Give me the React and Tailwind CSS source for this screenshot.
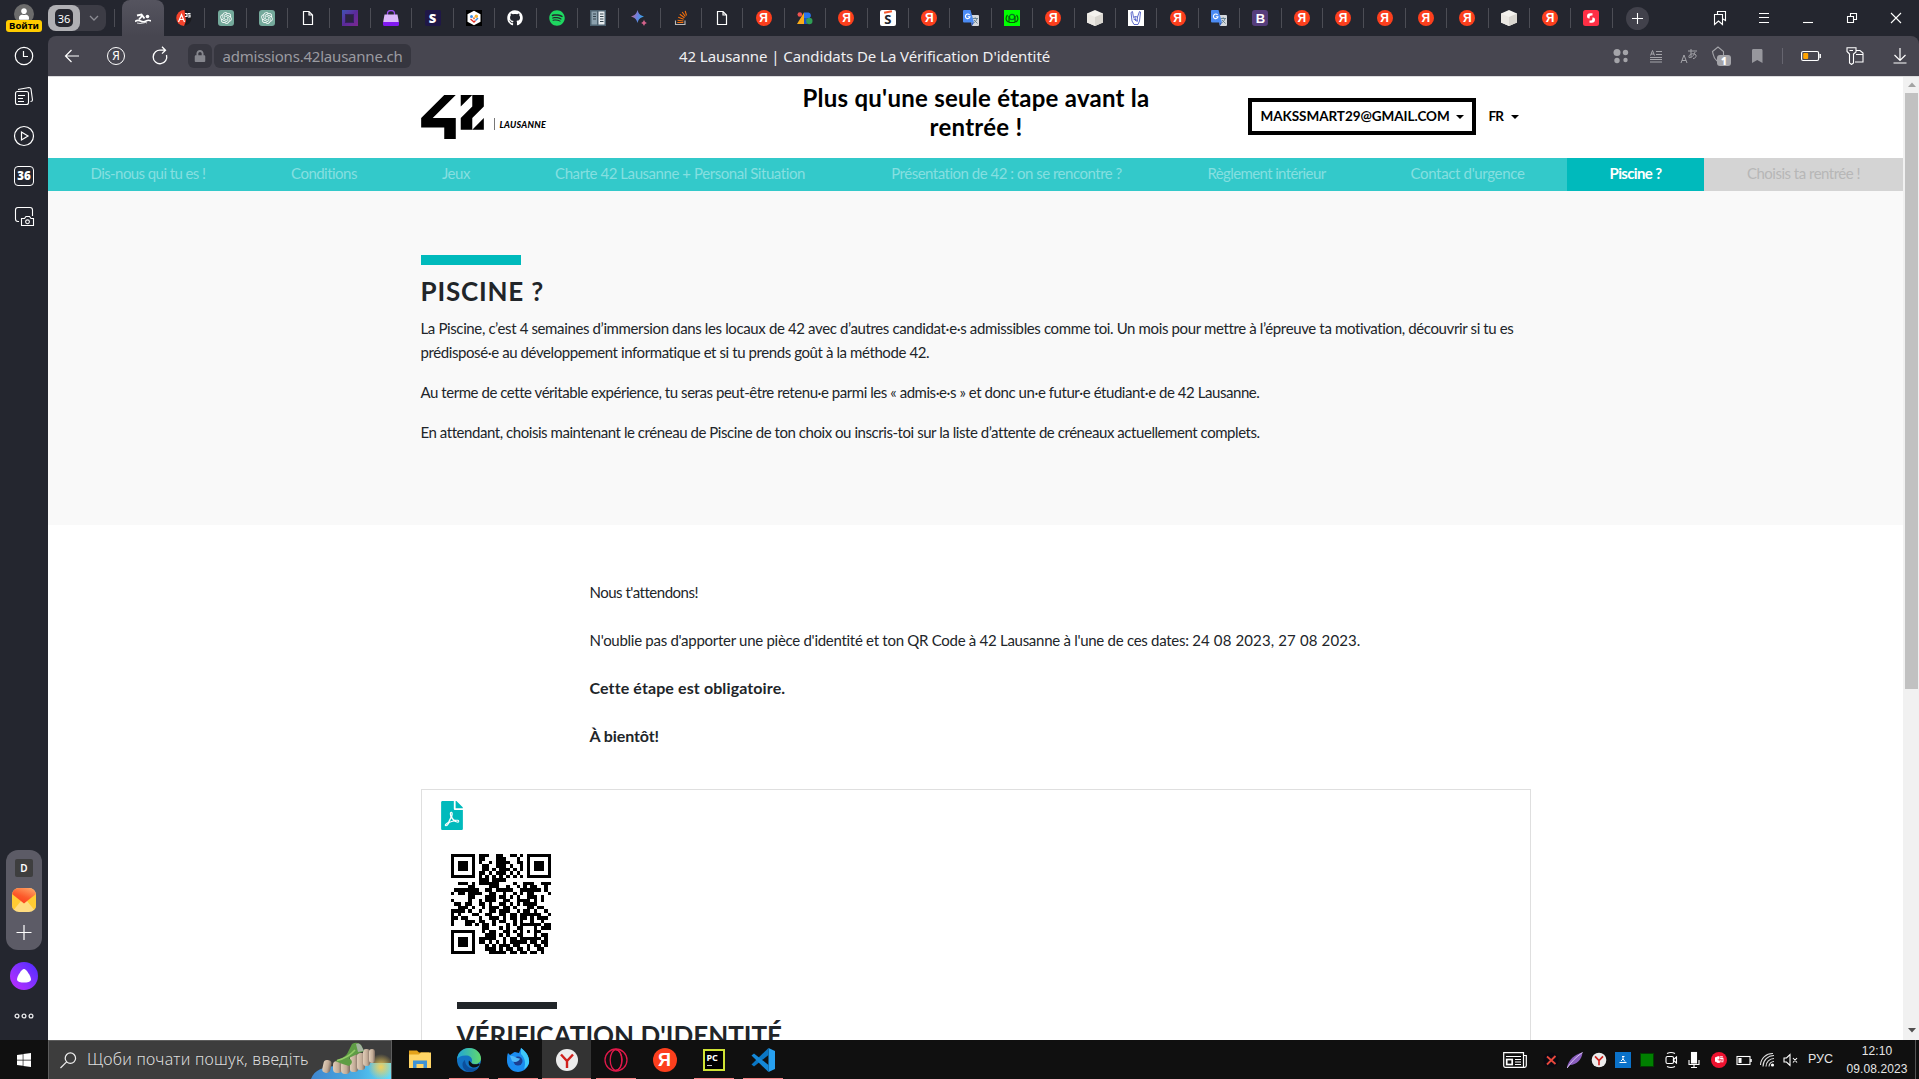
import {
  FaFilePdf, FaGithub, FaSpotify, FaBookmark, FaWindows, FaLock, FaFistRaised, FaUser,
} from "react-icons/fa";
import { RiOpenaiFill } from "react-icons/ri";

const QR_ROWS = [
  "11111110111001100110101111111",
  "10000010110001110001001000001",
  "10111010100101111001101011101",
  "10111010011001110100101011101",
  "10111010011010111010101011101",
  "10000010110101110101001000001",
  "11111110101010101010101111111",
  "00000000111011110000000000000",
  "00111010111111000010011100111",
  "00000110000111001001010110010",
  "01111111001101111100111111010",
  "10110111100110010010101100001",
  "00000110001110110101001110100",
  "10000100101110011001111010100",
  "01101100110100110101011110000",
  "00111010010111011010001101100",
  "11110100100110111001011010010",
  "10100011001100110110111111001",
  "11011000100111010110110101110",
  "10001110110010110010100100100",
  "10001101011010001010111111011",
  "00000000011000101001100010111",
  "11111110010110011010101011000",
  "10000010001110101001100010110",
  "10111010111110010110111111010",
  "10111010110101010111110110110",
  "10111010001010111011001011010",
  "10000010001110101101101001100",
  "11111110000111110110110110100",
];

function QrCode() {
  return (
    <svg viewBox="0 0 29 29" className="h-[100px] w-[100px]" shapeRendering="crispEdges">
      {QR_ROWS.map((row, y) =>
        [...row].map((c, x) => (c === "1" ? <rect key={`${x}-${y}`} x={x} y={y} width="1" height="1" /> : null))
      )}
    </svg>
  );
}

const ya = "flex size-4 items-center justify-center rounded-full bg-[#fc3f1d] font-['Liberation_Sans',sans-serif] text-[12px] font-bold leading-none text-white";

function Cube() {
  return (
    <svg viewBox="0 0 16 16" className="size-4">
      <path d="M8 0 16 3.500V12.500L8 16 0 12.500V3.500Z" fill="#f4f2ee" />
      <path d="M8 7 16 3.500V12.500L8 16Z" fill="#d9d6d0" />
      <path d="M0 3.500 8 7V16L0 12.500Z" fill="#ebe8e3" />
    </svg>
  );
}

function Translate() {
  return (
    <svg viewBox="0 0 16 16" className="size-4">
      <path d="M6 5H15a1 1 0 0 1 1 1V15a1 1 0 0 1-1 1H9Z" fill="#d5d8dc" />
      <path d="M9.500 8.500H15M12.200 7.300V8.500M14 8.500C13.500 11 11.500 12.500 10.500 13M11 10 14.500 13.500" stroke="#607d8b" fill="none" strokeWidth=".9" />
      <path d="M1 0H7.500L11 12.500H1a1 1 0 0 1-1-1V1A1 1 0 0 1 1 0Z" fill="#4b8bf4" />
      <path d="M6.600 5A2.300 2.300 0 1 0 7 6.700H4.800" stroke="#fff" strokeWidth="1.100" fill="none" />
      <path d="M8 12.500H11L9 16Z" fill="#2f5fc4" />
    </svg>
  );
}

function Favicon({ kind }) {
  switch (kind) {
    case "ya":
      return <span className={ya}>Я</span>;
    case "gpt":
      return <span className="flex size-4 items-center justify-center rounded-[3px] bg-[#74a99b]"><RiOpenaiFill className="size-3.5 text-white" /></span>;
    case "doc":
      return (
        <svg viewBox="0 0 16 16" className="size-4" fill="none" stroke="#fff" strokeWidth="1.200">
          <path d="M3.500 1.500H9L12.500 5V14.500H3.500ZM9 1.500V5H12.500" />
        </svg>
      );
    case "angular":
      return (
        <svg viewBox="0 0 16 16" className="size-4">
          <circle cx="8" cy="8" r="7.500" fill="#1b1b1f" />
          <path d="M8.500 0A8 8 0 0 0 8 16L10 11Z" fill="#f4432c" />
          <path d="M2.500 12 5.500 4.500 8.500 12M3.500 9.500H7.500M9 3.500h2v3h-2M12 3.500h2.500M12 5h2v2h-2" stroke="#fff" strokeWidth="1.200" fill="none" />
        </svg>
      );
    case "square":
      return <span className="flex size-4 items-center justify-center bg-linear-to-br from-[#3b52b5] via-[#5a2a9a] to-[#7d2690]"><span className="size-[9px] border border-[#35205f] bg-[#2a2440]" /></span>;
    case "bag":
      return (
        <svg viewBox="0 0 16 16" className="size-4">
          <path d="M4.500 6V3.500a3.500 3 0 0 1 7 0V6" fill="none" stroke="#9b4df0" strokeWidth="1.300" />
          <path d="M1.500 4.500H14.500L16 13H0Z" fill="#dcb8fa" />
          <path d="M0 12H16V14.500a1.500 1.500 0 0 1-1.500 1.500H1.500A1.500 1.500 0 0 1 0 14.500Z" fill="#8118f0" />
        </svg>
      );
    case "s":
      return <span className="flex size-4 items-center justify-center rounded-[2px] bg-[#1f1747] font-['Noto_Sans',sans-serif] text-[13px] font-black leading-none text-white">S</span>;
    case "hex":
      return (
        <svg viewBox="0 0 16 16" className="size-4">
          <path d="M0 0H16V16H0Z" fill="#000" />
          <path d="M8 .7 14.500 4.300V11.700L8 15.300 1.500 11.700V4.300Z" fill="#fff" />
          <circle cx="5.500" cy="6.500" r="1.500" fill="#3a8ee6" /><circle cx="10.300" cy="6.300" r="1.700" fill="#f2b233" />
          <path d="M4.500 9 8 12 9.500 10.500" stroke="#e6332a" strokeWidth="1.400" fill="none" /><path d="M9.500 10.500 12 8" stroke="#3a8ee6" strokeWidth="1.400" /><circle cx="8" cy="8.300" r="1.100" fill="#ef7d32" />
        </svg>
      );
    case "github":
      return <FaGithub className="size-4 text-white" />;
    case "spotify":
      return <FaSpotify className="size-4 text-[#1ed760]" />;
    case "book":
      return (
        <svg viewBox="0 0 16 16" className="size-4">
          <path d="M0 0H16V16H0Z" fill="#4d6270" /><path d="M1.500 1.500H7V14.500H1.500Z" fill="#8ba0ad" /><path d="M8.500 1.500H14.500V14.500H8.500Z" fill="#e8edf0" />
          <path d="M3 4H6M3 6.500H6M3 9H6M10 4H13.500M10 6.500H13.500M10 9H13.500M10 11.500H13.500" stroke="#34454f" />
        </svg>
      );
    case "spark":
      return (
        <svg viewBox="0 0 16 16" className="size-4">
          <defs><linearGradient id="spark" x1="0" x2="1" y2=".3"><stop stopColor="#d9667b" /><stop offset=".55" stopColor="#6f7fe0" /><stop offset="1" stopColor="#35a3e8" /></linearGradient></defs>
          <path d="M6.500 0C7.500 3.800 9.200 5.500 13 6.500 9.200 7.500 7.500 9.200 6.500 13 5.500 9.200 3.800 7.500 0 6.500 3.800 5.500 5.500 3.800 6.500 0Z" fill="url(#spark)" />
          <path d="M13 9.500c.6 2.200 1.300 2.900 3 3.500-1.700.6-2.400 1.300-3 3-.6-1.700-1.300-2.400-3-3 1.700-.6 2.400-1.300 3-3.500Z" fill="#d5638c" />
        </svg>
      );
    case "so":
      return (
        <svg viewBox="0 0 16 16" className="size-4" fill="none">
          <path d="M2.500 10.500V14.500H12V10.500" stroke="#bcbbbb" strokeWidth="1.100" />
          <path d="M4.300 12.500H10.300M4.500 10.200 10.400 11M5.200 7.300 10.700 9.200M6.800 4.300 11.500 7.700M9.200 2 12.400 6.500M12.200.8 13.500 5.500" stroke="#f4700c" strokeWidth="1.100" />
        </svg>
      );
    case "color":
      return (
        <svg viewBox="0 0 16 16" className="size-4">
          <circle cx="2.800" cy="4.500" r="2.300" fill="#ef5350" />
          <path d="M7 2.500V14H0Z" fill="#fbab18" />
          <path d="M7 2.500H11.500a3 3 0 0 1 1 5.500H7Z" fill="#2a73e8" /><path d="M7 8H10V14H7Z" fill="#1b52c5" />
          <circle cx="12.300" cy="11" r="3.200" fill="#2f9e55" />
        </svg>
      );
    case "swhite":
      return <span className="relative flex size-4 items-center justify-center rounded-[2px] bg-white font-['Noto_Sans',sans-serif] text-[13px] font-bold leading-none text-[#20242c]"><span className="absolute top-[1px] right-[4px] h-[2px] w-2 -rotate-12 bg-[#f4572b]" /><span className="pt-0.5">S</span></span>;
    case "green":
      return (
        <svg viewBox="0 0 16 16" className="size-4">
          <path d="M0 0H16V16H0Z" fill="#0f0" />
          <circle cx="8" cy="7" r="2.600" fill="none" stroke="#072" strokeWidth="1.300" />
          <path d="M3.500 5C1 8 2 12 5.500 12M12.500 5C15 8 14 12 10.500 12M5 6V12M11 6V12M5 12.500H11" fill="none" stroke="#085a08" strokeWidth="1.200" />
        </svg>
      );
    case "cube":
      return <Cube />;
    case "hand":
      return (
        <svg viewBox="0 0 16 16" className="size-4">
          <path d="M0 0H16V16H0Z" fill="#fff" />
          <path d="M4.500 1.500 5.500 7.500 7 6.500 9.500 7 11.500 1.500 12.500 2 11.500 11 10 14.500H6L4 11 3 2.500ZM5.500 9 9.500 10.500M7 7 7.500 11M9.500 7 9 12" fill="none" stroke="#4f5cc6" strokeWidth=".9" />
        </svg>
      );
    case "tr":
      return <Translate />;
    case "b":
      return <span className="flex size-4 items-center justify-center rounded-[3px] bg-[#563d7c] font-['Liberation_Sans',sans-serif] text-[13px] font-bold leading-none text-white">B</span>;
    case "red":
      return (
        <svg viewBox="0 0 16 16" className="size-4">
          <rect width="16" height="16" rx="2.500" fill="#ff2f45" />
          <path d="M9.500 3.200V5.400H8.200A1.600 1.600 0 0 0 6.600 7V8.400H6A2 2 0 0 1 4 6.400 3.200 3.200 0 0 1 7.200 3.200ZM6.500 12.800V10.600H7.800A1.600 1.600 0 0 0 9.400 9V7.600H10A2 2 0 0 1 12 9.600 3.200 3.200 0 0 1 8.800 12.800Z" fill="#fff" />
        </svg>
      );
    default:
      return null;
  }
}

const TABS = [
  "angular", "gpt", "gpt", "doc", "square", "bag", "s", "hex", "github", "spotify", "book", "spark", "so", "doc", "ya", "color", "ya",
  "swhite", "ya", "tr", "green", "ya", "cube", "hand", "ya", "tr", "b", "ya", "ya", "ya", "ya", "ya", "cube", "ya", "red",
];

function TabStrip() {
  return (
    <div className="flex h-9 shrink-0 items-stretch">
      <div className="my-[5px] flex w-[58px] rounded-lg bg-[#3c3c45]">
        <div className="flex w-8 items-center justify-center rounded-lg bg-[#b0b0b4]">
          <span className="flex h-[18px] w-[18px] items-center justify-center rounded-[5px] bg-[#26272f] font-['Noto_Sans',sans-serif] text-[11px] leading-none text-white">36</span>
        </div>
        <svg viewBox="0 0 26 26" className="w-[26px]" fill="none" stroke="#8c8c93" strokeWidth="1.300"><path d="M10 11 14 15 18 11" /></svg>
      </div>
      <div className="my-[9px] ml-2 mr-[7px] w-px bg-[#4c4d55]" />
      <div className="flex w-[42px] items-center justify-center rounded-t-lg bg-linear-to-b from-[#55545f] to-[#474650]">
        <svg viewBox="0 0 16 16" className="size-4" fill="none" stroke="#fff">
          <path d="M2 5.500 6.500 4.500 9.500 8.500M7 6 4 9.500" strokeWidth="1.900" /><circle cx="12.500" cy="6.500" r="1.800" fill="#fff" stroke="none" />
          <path d="M0 11.500Q2.500 9.500 5.500 11T11 11 16 11" strokeWidth="1.700" /><path d="M2 13Q5 14 8 13T12 13" strokeWidth=".8" />
        </svg>
      </div>
      {TABS.map((k, i) => (
        <div key={i} className="flex w-[41.4px] shrink-0 items-center">
          <div className="flex flex-1 justify-center"><Favicon kind={k} /></div>
          <div className="h-5 w-px bg-[#4c4d55]" />
        </div>
      ))}
      <div className="flex flex-1 items-center pl-[13px]">
        <svg viewBox="0 0 23 23" className="size-[23px] rounded-full bg-[#41414b]" stroke="#fff" strokeWidth="1.100"><path d="M6 11.500H17M11.500 6V17" /></svg>
      </div>
      <div className="flex w-[221px] items-center">
        <svg viewBox="0 0 44 36" className="w-11" fill="none" stroke="#fff" strokeWidth="1.100">
          <path d="M16.500 14.500H24.500V24.500L20.500 21 16.500 24.500ZM19.500 14V11.500H27.500V20.500L25 19" />
        </svg>
        <svg viewBox="0 0 44 36" className="w-11" stroke="#fff" strokeWidth="1.100"><path d="M17 13.500H27M17 17.500H27M17 22.500H27" /></svg>
        <svg viewBox="0 0 44 36" className="w-11" stroke="#fff" strokeWidth="1.100"><path d="M17 22.500H27" /></svg>
        <svg viewBox="0 0 44 36" className="w-11" fill="none" stroke="#fff" strokeWidth="1.100"><path d="M17.500 16.500H23.500V22.500H17.500ZM20.500 16.500V13.500H26.500V19.500H23.500" /></svg>
        <svg viewBox="0 0 44 36" className="w-11" stroke="#fff" strokeWidth="1.100"><path d="M17 13 27 23M27 13 17 23" /></svg>
      </div>
    </div>
  );
}

function ToolbarIcons() {
  return (
    <div className="flex h-10 w-[320px] items-center text-[#a4a4a9]">
      <svg viewBox="0 0 16 16" className="ml-[14px] size-4" fill="currentColor"><circle cx="4" cy="4.500" r="3.500" /><circle cx="12.500" cy="4.500" r="2.700" /><circle cx="4" cy="12.500" r="2.700" /><circle cx="12.500" cy="12" r="2.200" /></svg>
      <svg viewBox="0 0 14 14" className="ml-[20px] size-[14px]" fill="none" stroke="currentColor"><path d="M7 2.500H13M7 5.500H13M1 8.500H13M1 10.500H13M1 13H13M1.500 6.500 3.500 1.500 5.500 6.500M2 5H5" /></svg>
      <svg viewBox="0 0 18 16" className="ml-[17px] h-4 w-[18px]" fill="none" stroke="currentColor"><path d="M1 15 4 7 7 15M2 12.500H6M8 3H17M11 1V9.500M15 4C14 8 11 10 9 9.500 8 6 14 4.500 16 7 16.500 9 15 10.500 13 10.500" /></svg>
      <span className="relative ml-[13px] h-5 w-5">
        <svg viewBox="0 0 20 20" className="size-5" fill="none" stroke="currentColor" strokeWidth="1.100"><path d="M6 15C2 12 2.500 9 1.500 5.500L7 1 12.500 5.500V9" /></svg>
        <span className="absolute top-[9px] left-[6px] flex h-[11px] w-[14px] items-center justify-center rounded-[3px] bg-[#a4a4a9] text-[10px] leading-none font-black text-white">1</span>
      </span>
      <FaBookmark className="ml-[21px] h-[14px] w-[10.500px] text-[#97979d]" />
      <div className="ml-[19px] h-4 w-px bg-[#66656f]" />
      <svg viewBox="0 0 20 12" className="ml-[18px] h-3 w-5" fill="none"><rect x=".6" y="1.500" width="17" height="9" rx="1.500" stroke="#fff" strokeWidth="1.200" /><path d="M19.200 4V8" stroke="#fff" strokeWidth="1.500" /><rect x="2.200" y="3" width="5" height="6" rx="1" fill="#ffa300" /></svg>
      <svg viewBox="0 0 18 18" className="ml-[25px] size-[18px]" fill="none" stroke="#fff" strokeWidth="1.100"><path d="M1 .8H10V5L7.500 7V16L5.500 17.500 3.500 16V7L1 4.500ZM3.500 3.500H7M10 3.500H14L17 6V15H9M10 7.500H17" /></svg>
      <svg viewBox="0 0 14 16" className="ml-[29px] h-4 w-[14px]" fill="none" stroke="#fff" strokeWidth="1.200"><path d="M7 0V12.500M1.500 7 7 12.500 12.500 7M.5 15H13.500" /></svg>
    </div>
  );
}

function BrowserBar() {
  return (
    <div className="flex h-10 shrink-0 items-center rounded-t-lg bg-[#474650] font-['Noto_Sans',sans-serif] text-[15px] text-[#f0f0f2]">
      <svg viewBox="0 0 20 20" className="ml-[14px] size-5" fill="none" stroke="#fff" strokeWidth="1.200"><path d="M17 10H3.500M9.500 4 3.500 10 9.500 16" /></svg>
      <span className="ml-[25px] flex size-[18px] items-center justify-center rounded-full border border-white text-[12px] leading-none text-white">Я</span>
      <svg viewBox="0 0 20 20" className="ml-[25px] size-5" fill="none" stroke="#fff" strokeWidth="1.300"><path d="M16.500 9A6.800 6.800 0 1 1 11 4.200H15M12 .8 15.500 4.200 12 7.600" /></svg>
      <span className="ml-[18px] flex h-6 w-6 items-center justify-center rounded-md bg-[#36363f]"><FaLock className="size-3 text-[#85868d]" /></span>
      <span className="ml-0.5 flex h-6 w-[197px] items-center justify-center rounded-md bg-[#36363f] tracking-[-0.21px] text-[#9b9ba1]">admissions.42lausanne.ch</span>
      <span className="ml-[268px] flex-1 whitespace-nowrap tracking-[-0.07px]">42 Lausanne | Candidats De La Vérification D'identité</span>
      <ToolbarIcons />
    </div>
  );
}

function Sidebar() {
  const cell = "size-6";
  return (
    <div className="flex w-12 shrink-0 flex-col items-center bg-[#24262f]">
      <div className="flex h-9 w-full flex-col items-center pt-1">
        <div className="flex size-5 shrink-0 justify-center overflow-hidden rounded-full bg-[#6c6c6c] pt-0.5"><FaUser className="h-4 w-2.5 text-white" /></div>
        <span className="relative -mt-1 flex h-3 w-9 shrink-0 items-center justify-center rounded-[3px] bg-[#fc0] font-['Noto_Sans',sans-serif] text-[9.500px] font-bold leading-none text-black">Войти</span>
      </div>
      <svg viewBox="0 0 24 24" className={cell + " mt-2"} fill="none" stroke="#fff" strokeWidth="1.200"><circle cx="12" cy="12" r="8.700" /><path d="M11.500 7V12.500H16" /></svg>
      <svg viewBox="0 0 24 24" className={cell + " mt-4"} fill="none" stroke="#fff" strokeWidth="1.100">
        <rect x="3.500" y="7.500" width="13" height="13" rx="2" /><path d="M6 11.500H13M6 14.500H11M6 17.500H12M6 5.500 17 3.500Q18.500 3.500 19 5L20.500 16Q20.500 17.500 18.500 17.500" />
      </svg>
      <svg viewBox="0 0 24 24" className={cell + " mt-4"} fill="none" stroke="#fff" strokeWidth="1.200"><circle cx="12" cy="12" r="9.500" /><path d="M9.500 8V16L16 12Z" /></svg>
      <span className="mt-[18px] flex size-5 items-center justify-center rounded border border-white font-['Noto_Sans',sans-serif] text-[11.500px] font-black leading-none text-white">36</span>
      <svg viewBox="0 0 24 24" className={cell + " mt-[19px]"} fill="none" stroke="#fff" strokeWidth="1.100">
        <path d="M20.500 11V5Q20.500 2.500 18 2.500H6Q3.500 2.500 3.500 5V14Q3.500 16.500 6 16.500H7" /><path d="M9.500 13.500H12.500L14 11.500H17.500L19 13.500H21.500V20.500H9.500Z" /><circle cx="15.500" cy="16.800" r="1.900" />
      </svg>
      <div className="flex-1" />
      <div className="flex h-[100px] w-9 flex-col items-center rounded-xl bg-[#5c5b66] pt-[9px]">
        <span className="flex size-[18px] items-center justify-center rounded-[2px] bg-[#3e3e3f] font-['Noto_Sans',sans-serif] text-[10px] font-semibold leading-none text-white">D</span>
        <svg viewBox="0 0 24 24" className="mt-[11px] size-6 rounded-[7px]">
          <path d="M0 0H24V24H0Z" fill="#ffdc80" /><path d="M0 5 9 13 0 24ZM24 5 15 13 24 24Z" fill="#ffcc33" />
          <path d="M0 0H24V6L12 15.500 0 6Z" fill="url(#mail)" />
          <defs><linearGradient id="mail" x1=".3" y1="1" x2=".9" y2="0"><stop stopColor="#fc3f1d" /><stop offset=".4" stopColor="#fc5a2a" /><stop offset="1" stopColor="#ffa868" /></linearGradient></defs>
        </svg>
        <svg viewBox="0 0 24 24" className="mt-2 size-6" stroke="#fff" strokeWidth="1.200"><path d="M4.500 12.500H19.500M12 5V20" /></svg>
      </div>
      <div className="mt-3 flex size-7 items-center justify-center rounded-full bg-linear-to-tr from-[#c026ff] to-[#4a26ff]">
        <svg viewBox="0 0 16 16" className="size-4"><path d="M8 1C10.500 1 15 8.500 15 11.500 15 14 11 14.500 8 14.500S1 14 1 11.500C1 8.500 5.500 1 8 1Z" fill="#fff" /></svg>
      </div>
      <svg viewBox="0 0 20 8" className="mt-[22px] mb-5 h-2 w-5" fill="none" stroke="#e8e8ea" strokeWidth="1.300"><circle cx="3" cy="4" r="1.900" /><circle cx="10" cy="4" r="1.900" /><circle cx="17" cy="4" r="1.900" /></svg>
    </div>
  );
}

function Caret() {
  return <svg viewBox="0 0 8 4" className="h-1 w-2"><path d="M0 0H8L4 4Z" /></svg>;
}

function Header() {
  return (
    <header className="mx-auto flex h-[81px] w-[1110px] shrink-0 items-start text-black">
      <div className="mt-[18px] flex w-[381px] items-start">
        <svg viewBox="32 -51.1 896 629" className="h-[44px] w-[63px]">
          <path d="M32 412.600H362.100V578H526.800V279.100H197.300L526.800-51.100H362.100L32 279.100Z" />
          <path d="M597.900 114.200 762.700-51.100H597.900ZM762.700 114.200 597.900 279.100V443.900H762.700V279.100L928 114.200V-51.100H762.700ZM928 279.100 762.700 443.900H928Z" />
        </svg>
        <span className="mt-[23px] ml-[10px] flex h-3 items-center border-l-[1.500px] border-[#777] pl-[5px] text-[9px] font-black italic leading-none tracking-[0.25px]">LAUSANNE</span>
      </div>
      <h2 className="mt-[6px] w-[349px] text-center text-[24px] leading-[29px] font-bold tracking-[0.25px]">
        <span className="whitespace-nowrap">Plus qu'une seule étape avant la</span><br />rentrée !
      </h2>
      <div className="mt-[21px] ml-[97px] flex h-[37px] w-[228px] items-center justify-between border-4 border-black pr-2 pl-[9px] text-[13.500px] font-bold tracking-[-0.05px]">
        MAKSSMART29@GMAIL.COM <Caret />
      </div>
      <div className="mt-[21px] ml-[13px] flex h-[37px] items-center gap-2 text-[13.500px] font-bold tracking-[-0.8px]">FR <Caret /></div>
    </header>
  );
}

const STEP = "flex items-center justify-center ";
function Steps() {
  return (
    <nav className="flex h-[33px] shrink-0 items-stretch bg-[#33c9ca] text-[15px] text-[#85dfe0] *:pb-0.5">
      <div className={STEP + "w-[200px] tracking-[-0.58px]"}>Dis-nous qui tu es !</div>
      <div className={STEP + "w-[152px] tracking-[-0.53px]"}>Conditions</div>
      <div className={STEP + "w-[112px] tracking-[-0.45px]"}>Jeux</div>
      <div className={STEP + "w-[336px] tracking-[-0.44px]"}>Charte 42 Lausanne + Personal Situation</div>
      <div className={STEP + "w-[317px] tracking-[-0.49px]"}>Présentation de 42 : on se rencontre ?</div>
      <div className={STEP + "w-[203px] tracking-[-0.62px]"}>Règlement intérieur</div>
      <div className={STEP + "w-[199px] tracking-[-0.35px]"}>Contact d'urgence</div>
      <div className={STEP + "w-[137px] bg-[#00babc] font-bold tracking-[-0.64px] text-white"}>Piscine ?</div>
      <div className={STEP + "w-[199px] bg-[#d4d4d4] tracking-[-0.51px] text-[#b7b7b7]"}>Choisis ta rentrée !</div>
    </nav>
  );
}

function Page() {
  return (
    <main className="flex min-w-0 flex-1 flex-col overflow-hidden bg-white font-['Lato',sans-serif] text-[#212529]">
      <Header />
      <Steps />
      <section className="h-[334px] shrink-0 bg-[#f9f9f9] pt-16">
        <div className="mx-auto w-[1110px] text-[15px] leading-6 whitespace-nowrap">
          <div className="h-[10px] w-[100px] bg-[#00babc]" />
          <h1 className="mt-[10px] mb-[9px] text-[26px] leading-8 font-bold tracking-[0.8px]">PISCINE ?</h1>
          <p className="mb-4">
            <span className="tracking-[-0.37px]">La Piscine, c’est 4 semaines d’immersion dans les locaux de 42 avec d’autres candidat·e·s admissibles comme toi. Un mois pour mettre à l’épreuve ta motivation, découvrir si tu es</span>
            <br />
            <span className="tracking-[-0.41px]">prédisposé·e au développement informatique et si tu prends goût à la méthode 42.</span>
          </p>
          <p className="mb-4 tracking-[-0.45px]">Au terme de cette véritable expérience, tu seras peut-être retenu·e parmi les « admis·e·s » et donc un·e futur·e étudiant·e de 42 Lausanne.</p>
          <p className="tracking-[-0.445px]">En attendant, choisis maintenant le créneau de Piscine de ton choix ou inscris-toi sur la liste d’attente de créneaux actuellement complets.</p>
        </div>
      </section>
      <section className="mx-auto w-[1110px] shrink-0 pt-[55px]">
        <div className="flex flex-col gap-6 pl-[169px] text-[15px] leading-6">
          <p className="tracking-[-0.49px]">Nous t'attendons!</p>
          <p className="tracking-[-0.28px]">N'oublie pas d'apporter une pièce d'identité et ton QR Code à 42 Lausanne à l'une de ces dates: <span className="tracking-[0.13px]">24 08 2023, 27 08 2023.</span></p>
          <p className="text-[16px] font-bold tracking-[0.11px]">Cette étape est obligatoire.</p>
          <p className="text-[16px] font-bold tracking-[-0.1px]">À bientôt!</p>
        </div>
        <div className="mt-[41px] h-[400px] border border-[#dfdfdf]">
          <FaFilePdf className="mt-[11px] ml-[19px] h-[29px] w-[22px] text-[#00babc]" />
          <div className="mt-6 ml-[29px]"><QrCode /></div>
          <div className="mt-12 ml-[35px] h-[7px] w-[100px] bg-[#212529]" />
          <h2 className="mt-[10px] ml-[35px] text-[26px] leading-8 font-bold">VÉRIFICATION D'IDENTITÉ</h2>
        </div>
      </section>
    </main>
  );
}

function Scrollbar() {
  return (
    <div className="flex w-4 shrink-0 flex-col items-center bg-[#f1f1f1] pl-px">
      <svg viewBox="0 0 16 16" className="size-4 shrink-0"><path d="M4 10H12L8 5.500Z" fill="#a3a3a3" /></svg>
      <div className="h-[596px] w-[13px] bg-[#c1c1c1]" />
      <div className="flex-1" />
      <svg viewBox="0 0 16 16" className="mb-0.5 size-4"><path d="M4 6H12L8 10.500Z" fill="#505050" /></svg>
    </div>
  );
}

function YandexY({ className }) {
  return (
    <svg viewBox="0 0 24 24" className={className}>
      <circle cx="12" cy="12" r="11" fill="#ececec" /><path d="M6 6.500 12 13 18 6.500M12 13V20" fill="none" stroke="#d0201c" strokeWidth="2.400" />
    </svg>
  );
}

function TaskItem({ children, active, open = true }) {
  return (
    <div className={"flex h-full w-[49px] flex-col items-center " + (active ? "bg-[#333]" : "")}>
      <div className="flex flex-1 items-center pt-px">{children}</div>
      <div className={"h-px " + (active ? "w-full " : "w-10 ") + (open ? "bg-[#f48484]" : "")} />
    </div>
  );
}

function Landscape() {
  return (
    <svg viewBox="0 0 80 38" className="h-[38px] w-20 shrink-0">
      <defs>
        <linearGradient id="sea"><stop stopColor="#3f86cf" /><stop offset=".6" stopColor="#4aaee4" /><stop offset="1" stopColor="#5fdcff" /></linearGradient>
        <radialGradient id="sun"><stop stopColor="#f5cf58" /><stop offset="1" stopColor="#f5cf58" stopOpacity="0" /></radialGradient>
        <linearGradient id="rock"><stop stopColor="#e0cdb8" /><stop offset=".6" stopColor="#c2ab96" /><stop offset="1" stopColor="#7c6b60" /></linearGradient>
      </defs>
      <path d="M0 38C3 29 12 26 24 25L60 22H80V38Z" fill="url(#sea)" /><circle cx="70" cy="26" r="13" fill="url(#sun)" />
      <rect x="12" y="19" width="8" height="13" rx="3.500" fill="url(#rock)" transform="rotate(12 16 25)" />
      <rect x="22" y="20" width="9" height="12" rx="4" fill="url(#rock)" /><rect x="30" y="20" width="9" height="13" rx="4" fill="url(#rock)" />
      <rect x="39" y="13" width="8" height="18" rx="3" fill="url(#rock)" /><rect x="46" y="12" width="8" height="17" rx="3" fill="url(#rock)" />
      <rect x="52" y="8" width="7" height="17" rx="3" fill="url(#rock)" /><rect x="58" y="8" width="6" height="14" rx="3" fill="url(#rock)" />
      <path d="M41 3Q46 0 50 4L53 10Q46 13 38 17 44 21 38 25 31 23 24 20 33 17 36 13Z" fill="#5f9d45" />
      <path d="M45 3Q49 1 51 6L53 10 47 11Z" fill="#a3b3a0" /><path d="M26 19.500Q37 17 44 9" stroke="#94cb68" strokeWidth="1.600" fill="none" />
    </svg>
  );
}

function Tray() {
  return (
    <div className="flex h-full items-center">
      <svg viewBox="0 0 24 16" className="h-4 w-6" fill="none" stroke="#fff" strokeWidth="1.200">
        <path d="M.7.7H20.500V15.300H2.500Q.7 15.300.7 13.500ZM20.500 3.500H23.300V13.500Q23.300 15.300 21.500 15.300H20M3 4.500H18M12 7.500H18M12 10H18M12 12.500H18" /><rect x="3.700" y="7.500" width="5.500" height="5" strokeWidth="1.700" />
      </svg>
      <svg viewBox="0 0 16 16" className="ml-4 size-4"><circle cx="8" cy="8" r="7.500" fill="#0a0a12" /><path d="M4 4.500 12.500 12M12.500 4 4 12.500" stroke="#e8483c" strokeWidth="1.800" /></svg>
      <svg viewBox="0 0 16 16" className="ml-2 size-4"><path d="M0 16C1 8 8 2 15.500.5 15 8 9 13 3 13Z" fill="#8b5fc0" /><path d="M0 16C5 9 9 5 15.500.5" stroke="#d9c3f2" fill="none" /></svg>
      <YandexY className="ml-2 size-4" />
      <span className="ml-2 flex size-4 items-center justify-center bg-[#0b72c9]">
        <svg viewBox="0 0 16 16" className="size-4" fill="none" stroke="#fff"><path d="M8 4.500V7L6 9M8 7 10 9.500M4.500 10.500H11.500M7 4.500H9.500" /></svg>
      </span>
      <span className="ml-[9px] size-[14px] border border-[#013f01] bg-[#008000]" />
      <svg viewBox="0 0 16 18" className="ml-[9px] h-[18px] w-4" fill="none" stroke="#fff" strokeWidth="1.100"><path d="M4 2.500Q8 .5 12 2.500M4 15.500Q8 17.500 12 15.500M10 9 13.500 6V12L10 9" /><rect x="3" y="5.500" width="7.500" height="7" rx="1.500" /></svg>
      <svg viewBox="0 0 16 18" className="ml-[7px] h-[18px] w-4" fill="none" stroke="#fff" strokeWidth="1.100"><rect x="5.500" y="1.500" width="5" height="10.500" fill="#fff" /><path d="M3 9V13.500H13V9M8 13.500V16.500M5 16.500H11" /></svg>
      <span className="ml-[9px] flex size-4 items-center justify-center rounded-full bg-[#ee1230]"><FaFistRaised className="size-[9px] rotate-90 text-white" /></span>
      <svg viewBox="0 0 16 16" className="ml-[9px] size-4" fill="none" stroke="#fff" strokeWidth="1.100"><rect x="1" y="4.500" width="13" height="8" /><path d="M15 7V10" strokeWidth="1.500" /><path d="M3 6.500H5V10.500H3Z" fill="#fff" /></svg>
      <svg viewBox="0 0 16 16" className="ml-2 size-4" fill="none" stroke="#ddd" strokeWidth="1.100"><path d="M3 14.500A11 11 0 0 1 14 3.500M6 14.500A8 8 0 0 1 14 6.500M9 14.500A5 5 0 0 1 14 9.500M.5 13A12 12 0 0 1 13 1.500" /><circle cx="12.500" cy="13" r="1.600" fill="#fff" stroke="none" /></svg>
      <svg viewBox="0 0 16 16" className="ml-[7px] size-4" fill="none" stroke="#fff" strokeWidth="1.100"><path d="M1 6H3.500L7 2.500V13.500L3.500 10H1ZM10 6 14 10.500M14 6 10 10.500" /></svg>
      <span className="ml-[9px] w-[26px] text-[12.500px] text-[#e6e6e6]">РУС</span>
      <span className="ml-[12px] flex w-[62px] flex-col items-center text-[12px] leading-[18px] whitespace-nowrap tracking-[0.1px] text-[#e6e6e6]"><span>12:10</span><span>09.08.2023</span></span>
      <span className="ml-[7px] mr-[3px] h-full w-px bg-[#555]" />
    </div>
  );
}

function Taskbar() {
  return (
    <div className="flex h-[39px] shrink-0 items-center bg-[#101010] font-['Liberation_Sans',sans-serif]">
      <div className="flex w-12 justify-center"><FaWindows className="size-4 text-white" /></div>
      <div className="flex h-full w-[344px] items-center overflow-hidden border border-b-0 border-[#5d5d5d] bg-[#3d3d3d]">
        <svg viewBox="0 0 18 18" className="ml-[11px] size-[17px]" fill="none" stroke="#eee" strokeWidth="1.300"><circle cx="11" cy="6.500" r="5.500" /><path d="M7 10.500.5 17" /></svg>
        <span className="ml-[10px] w-[224px] pb-0.5 font-['Noto_Sans',sans-serif] text-[16px] font-light whitespace-nowrap tracking-[0.25px] text-[#dcdcdc]">Щоби почати пошук, введіть</span>
        <Landscape />
      </div>
      <div className="ml-[3px] flex h-full">
        <TaskItem open={false}>
          <svg viewBox="0 0 22 19" className="h-[19px] w-[22px]"><path d="M0 .5H8L10 2.500H20V6H0Z" fill="#e3a21a" /><path d="M0 4.500H10L12 2.500H22V18H0Z" fill="#ffd566" /><path d="M4 18V10.500H18V18H14.500V14H7.500V18Z" fill="#3f94d6" /></svg>
        </TaskItem>
        <TaskItem>
          <svg viewBox="0 0 24 24" className="size-6">
            <defs><linearGradient id="ed"><stop stopColor="#1fa5d9" /><stop offset="1" stopColor="#62d96b" /></linearGradient></defs>
            <circle cx="12" cy="12" r="12" fill="#1273c4" />
            <path d="M0 11C1 4 6 0 12 0 19 0 24 5 24 10.500 24 14 21 16 18 16 15.500 16 14 15 14.500 14 16 12 14.500 8 10 7.500 5 7 1.500 9 0 11Z" fill="url(#ed)" />
            <path d="M8 12C8 17 12 20.500 16.500 20.500 19 20.500 21 20 22 19 19 23.500 15 24 12 24 8 23 5.500 20 5.500 16.500 5.500 14.500 6.500 13 8 12Z" fill="#0c4f9c" />
            <path d="M12 12.500C10.500 17 14 19.500 17 19.500 19.500 19.500 22 18 23.500 15.500L24 16 23 18.500 22 15.500C19 17 15 16.500 14 14.500Z" fill="#101010" />
          </svg>
        </TaskItem>
        <TaskItem>
          <svg viewBox="0 0 24 24" className="size-6">
            <path d="M2 5 4 7 7 5C9 3 11 5 13 5L15 0C19 3 24 8 23 15 22 20 17 24 12 24 6 24 1 19 1 13 1 10 1 7 2 5Z" fill="#1a8cf0" />
            <path d="M15 0C19 3 24 8 23 15 22 18 20 20 18 21 20 15 19 10 15 6Z" fill="#3ec8fb" /><circle cx="12" cy="13" r="4.500" fill="#1b3f92" />
            <path d="M4 8C8 7 10 11 14 10.500 13 13.500 9 15 6 13Z" fill="#4fb9f8" />
          </svg>
        </TaskItem>
        <TaskItem active><YandexY className="size-6" /></TaskItem>
        <TaskItem>
          <svg viewBox="0 0 24 24" className="size-6" fill="none" stroke="#e0194a" strokeWidth="1.300"><circle cx="12" cy="12" r="11" /><ellipse cx="12" cy="12" rx="5.800" ry="10.500" /><path d="M12 1.500C20 3 20 21 12 22.500" /></svg>
        </TaskItem>
        <TaskItem open={false}><span className="flex size-6 items-center justify-center rounded-full bg-[#fc3f1d] text-[18px] font-bold leading-none text-white">Я</span></TaskItem>
        <TaskItem>
          <span className="flex size-[22px] flex-col justify-center border-[2.500px] border-[#cfe234] bg-black pl-[2px] font-['Noto_Sans',sans-serif] text-[9px] font-bold leading-none text-white">PC<span className="mt-[3px] h-[1.500px] w-[5px] bg-[#ccc]" /></span>
        </TaskItem>
        <TaskItem>
          <svg viewBox="0 0 24 24" className="size-6"><path d="M17.500 0 24 3V21L17.500 24Z" fill="#27a0f0" /><path d="M17.500 0V7L3 18.500.5 16.500Z" fill="#0a76c4" /><path d="M17.500 24V17L3 5.500.5 7.500Z" fill="#1488d8" /></svg>
        </TaskItem>
      </div>
      <div className="flex-1" />
      <Tray />
    </div>
  );
}

export default function App() {
  return (
    <div className="flex h-screen w-screen flex-col overflow-hidden bg-[#24262f]">
      <div className="flex min-h-0 flex-1">
        <Sidebar />
        <div className="flex min-w-0 flex-1 flex-col">
          <TabStrip />
          <BrowserBar />
          <div className="flex min-h-0 flex-1 border-t border-[#dcdcde] bg-white">
            <Page />
            <Scrollbar />
          </div>
        </div>
      </div>
      <Taskbar />
    </div>
  );
}
